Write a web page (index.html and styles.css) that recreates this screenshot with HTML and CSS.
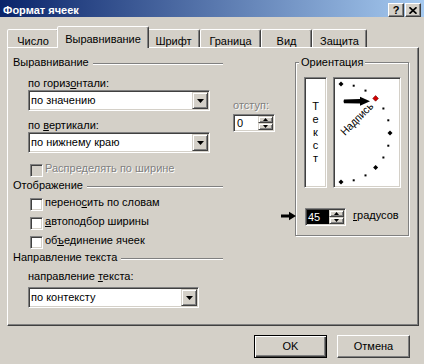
FILE: index.html
```html
<!DOCTYPE html>
<html lang="ru">
<head>
<meta charset="utf-8">
<title>Формат ячеек</title>
<link rel="stylesheet" href="styles.css">
</head>
<body>
<div class="titlebar">
  <span class="title">Формат ячеек</span>
  <div class="tb-buttons">
    <span class="tb-btn">?</span>
    <span class="tb-btn"><svg width="8" height="7" viewBox="0 0 8 7"><path d="M0.5 0.3 L7.5 6.7 M7.5 0.3 L0.5 6.7" stroke="#000" stroke-width="1.7" fill="none"/></svg></span>
  </div>
</div>

<div class="tabs">
  <div class="tab w-num">Число</div>
  <div class="tab active">Выравнивание</div>
  <div class="tab w-font">Шрифт</div>
  <div class="tab w-border">Граница</div>
  <div class="tab w-view">Вид</div>
  <div class="tab w-prot">Защита</div>
</div>

<div class="panel">
  <div class="col-left">
    <div class="grp-hdr"><span>Выравнивание</span><span class="line"></span></div>
    <div class="lbl lbl-h">по гориз<u>о</u>нтали:</div>
    <div class="combo w-wide">
      <span class="combo-val">по значению</span>
      <span class="dd-btn"><svg width="7" height="4" viewBox="0 0 7 4"><path d="M0 0 H7 L3.5 4 Z" fill="#000"/></svg></span>
    </div>
    <div class="lbl lbl-v">по <u>в</u>ертикали:</div>
    <div class="combo w-wide">
      <span class="combo-val">по нижнему краю</span>
      <span class="dd-btn"><svg width="7" height="4" viewBox="0 0 7 4"><path d="M0 0 H7 L3.5 4 Z" fill="#000"/></svg></span>
    </div>
    <div class="cb-row cb-first"><span class="cb disabled"></span><span class="cb-text dis">Распределять по ширине</span></div>
    <div class="grp-hdr hdr-2"><span>Отображение</span><span class="line"></span></div>
    <div class="cb-row cb-a"><span class="cb"></span><span class="cb-text">перено<u>с</u>ить по словам</span></div>
    <div class="cb-row cb-b"><span class="cb"></span><span class="cb-text"><u>а</u>втоподбор ширины</span></div>
    <div class="cb-row cb-b"><span class="cb"></span><span class="cb-text">об<u>ъ</u>единение ячеек</span></div>
    <div class="grp-hdr hdr-3"><span>Направление текста</span><span class="line"></span></div>
    <div class="lbl lbl-d">направление <u>т</u>екста:</div>
    <div class="combo w-narrow combo-d">
      <span class="combo-val">по контексту</span>
      <span class="dd-btn"><svg width="7" height="4" viewBox="0 0 7 4"><path d="M0 0 H7 L3.5 4 Z" fill="#000"/></svg></span>
    </div>
  </div>

  <div class="col-indent">
    <div class="lbl-ind dis">отступ:</div>
    <div class="spin spin-ind">
      <span class="spin-val">0</span>
      <span class="spin-btns">
        <span class="spin-btn"><svg width="5" height="3" viewBox="0 0 5 3"><path d="M0 3 H5 L2.5 0 Z" fill="#000"/></svg></span>
        <span class="spin-btn"><svg width="5" height="3" viewBox="0 0 5 3"><path d="M0 0 H5 L2.5 3 Z" fill="#000"/></svg></span>
      </span>
    </div>
  </div>

  <fieldset class="orient">
    <legend>Ориентация</legend>
    <div class="orient-row">
      <div class="vtext"><span>Т</span><span>е</span><span>к</span><span>с</span><span>т</span></div>
      <div class="dial">
        <svg width="64" height="107" viewBox="0 0 64 107">
          <g fill="#000">
            <polygon points="6,2.5 8.5,5 6,7.5 3.5,5"/>
            <polygon points="55,51.5 57.5,54 55,56.5 52.5,54"/>
            <polygon points="40.6,86.1 43.1,88.6 40.6,91.1 38.1,88.6"/>
            <polygon points="6,100.5 8.5,103 6,105.5 3.5,103"/>
            <rect x="17.7" y="5.7" width="2" height="2"/>
            <rect x="29.5" y="10.6" width="2" height="2"/>
            <rect x="47.4" y="28.5" width="2" height="2"/>
            <rect x="52.3" y="40.3" width="2" height="2"/>
            <rect x="52.3" y="65.7" width="2" height="2"/>
            <rect x="47.4" y="77.5" width="2" height="2"/>
            <rect x="29.5" y="95.4" width="2" height="2"/>
            <rect x="17.7" y="100.3" width="2" height="2"/>
            <path d="M9 20.5 L25 20 L25 17.8 L35 22.3 L25 26.8 L25 24.6 L9 24.2 Q8 22.4 9 20.5 Z"/>
          </g>
          <polygon points="40.6,16.6 43.4,19.4 40.6,22.2 37.8,19.4" fill="#d40000" stroke="#600" stroke-width="0.6"/>
          <text x="0" y="0" transform="translate(10 57) rotate(-45)" font-family="Liberation Sans, Arial, sans-serif" font-size="11" textLength="41" lengthAdjust="spacingAndGlyphs" fill="#000">Надпись</text>
        </svg>
      </div>
    </div>
    <div class="deg-row">
      <svg class="anno-arrow" width="16" height="10" viewBox="0 0 16 10"><path d="M0 3.4 H8 V0.8 L15 5 L8 9.2 V6.6 H0 Z" fill="#000"/></svg>
      <div class="spin spin-deg">
        <span class="spin-val"><span class="sel">45</span></span>
        <span class="spin-btns">
          <span class="spin-btn"><svg width="5" height="3" viewBox="0 0 5 3"><path d="M0 3 H5 L2.5 0 Z" fill="#000"/></svg></span>
          <span class="spin-btn"><svg width="5" height="3" viewBox="0 0 5 3"><path d="M0 0 H5 L2.5 3 Z" fill="#000"/></svg></span>
        </span>
      </div>
      <span class="deg-lbl"><u>г</u>радусов</span>
    </div>
  </fieldset>
</div>

<div class="buttons">
  <div class="btn default">OK</div>
  <div class="btn">Отмена</div>
</div>
</body>
</html>
```

FILE: styles.css
```css
* { box-sizing: border-box; }
html, body { margin: 0; padding: 0; }
body {
  width: 424px;
  height: 364px;
  overflow: hidden;
  background: #d4d0c8;
  font-family: "Liberation Sans", Arial, sans-serif;
  font-size: 11px;
  color: #000;
}

/* title bar */
.titlebar {
  height: 17px;
  background: linear-gradient(to right, #0a246a, #a6caf0);
  display: flex;
  justify-content: space-between;
  align-items: flex-start;
}
.title {
  color: #fff;
  font-weight: bold;
  padding: 2px 0 0 3px;
  line-height: 16px;
}
.tb-buttons {
  display: flex;
  gap: 1px;
  margin: 3px 3px 0 0;
}
.tb-btn {
  width: 16px;
  height: 14px;
  background: #d4d0c8;
  border: 1px solid;
  border-color: #fff #404040 #404040 #fff;
  box-shadow: inset -1px -1px #808080;
  display: flex;
  align-items: center;
  justify-content: center;
  font-weight: bold;
  font-size: 11px;
  line-height: 12px;
}

/* tabs */
.tabs {
  display: flex;
  align-items: flex-end;
  height: 21px;
  margin: 9px 0 0 7px;
}
.tab {
  height: 18px;
  background: #d4d0c8;
  border: 1px solid;
  border-bottom: none;
  border-color: #fff #404040 transparent #fff;
  border-radius: 2px 2px 0 0;
  box-shadow: inset -1px 0 #808080;
  text-align: center;
  padding-top: 4px;
  line-height: 14px;
}
.tab.active {
  width: 92px;
  height: 22px;
  margin: 0 -2px -1px;
  padding-top: 5px;
  line-height: 15px;
  position: relative;
  z-index: 1;
}
.w-num { width: 52px; }
.w-font { width: 53px; }
.w-border { width: 61px; }
.w-view { width: 51px; }
.w-prot { width: 55px; }

/* panel */
.panel {
  width: 412px;
  height: 279px;
  margin-left: 7px;
  border: 1px solid;
  border-color: #fff #404040 #404040 #fff;
  box-shadow: inset -1px -1px #808080;
  display: flex;
  align-items: flex-start;
  padding-left: 5px;
}

.col-left {
  width: 210px;
  padding-top: 8px;
}
.grp-hdr {
  display: flex;
  height: 13px;
  line-height: 13px;
}
.grp-hdr .line {
  flex: 1;
  height: 2px;
  margin: 7px 0 0 4px;
  border-top: 1px solid #808080;
  border-bottom: 1px solid #fff;
}
.hdr-2 { margin-top: 2px; }
.hdr-3 { margin-top: 2px; }

.lbl {
  margin-left: 15px;
  line-height: 13px;
  height: 13px;
}
.lbl-h { margin-top: 8px; }
.lbl-v { margin-top: 8px; }
.lbl-d { margin-top: 6px; }

.combo {
  display: flex;
  height: 21px;
  margin-left: 15px;
  background: #fff;
  border: 1px solid;
  border-color: #808080 #fff #fff #808080;
  box-shadow: inset 1px 1px #404040, inset -1px -1px #d4d0c8;
  padding: 1px;
}
.w-wide { width: 182px; }
.w-narrow { width: 171px; }
.combo-d { margin-top: 4px; }
.combo-val {
  flex: 1;
  padding-left: 1px;
  line-height: 17px;
  white-space: nowrap;
}
.dd-btn {
  width: 16px;
  height: 17px;
  background: #d4d0c8;
  border: 1px solid;
  border-color: #d4d0c8 #404040 #404040 #d4d0c8;
  box-shadow: inset 1px 1px #fff, inset -1px -1px #808080;
  display: flex;
  align-items: center;
  justify-content: center;
}
.dd-btn svg { display: block; }

.cb-row {
  display: flex;
  height: 15px;
  margin-left: 17px;
}
.cb-first { margin-top: 9px; }
.cb-a { margin-top: 4px; }
.cb-b { margin-top: 4px; }
.cb {
  width: 13px;
  height: 13px;
  margin-top: 2px;
  margin-right: 2px;
  background: #fff;
  border: 1px solid;
  border-color: #808080 #fff #fff #808080;
  box-shadow: inset 1px 1px #404040, inset -1px -1px #d4d0c8;
}
.cb.disabled { background: #d4d0c8; }
.cb-text {
  line-height: 13px;
  white-space: nowrap;
}
.dis {
  color: #808080;
  text-shadow: 1px 1px 0 #fff;
}

/* indent */
.col-indent {
  width: 42px;
  margin-left: 10px;
  padding-top: 51px;
}
.lbl-ind {
  line-height: 13px;
  height: 13px;
}
.spin {
  display: flex;
  height: 18px;
  background: #fff;
  border: 1px solid;
  border-color: #808080 #fff #fff #808080;
  box-shadow: inset 1px 1px #404040, inset -1px -1px #d4d0c8;
  padding: 1px;
}
.spin-ind { margin-top: 2px; }
.spin-val {
  flex: 1;
  line-height: 14px;
  padding-left: 2px;
}
.spin-btns {
  width: 15px;
  display: flex;
  flex-direction: column;
}
.spin-btn {
  flex: 1;
  background: #d4d0c8;
  border: 1px solid;
  border-color: #d4d0c8 #404040 #404040 #d4d0c8;
  box-shadow: inset 1px 1px #fff, inset -1px -1px #808080;
  display: flex;
  align-items: center;
  justify-content: center;
}
.spin-btn svg { display: block; }

/* orientation group */
.orient {
  width: 114px;
  margin: 8px 0 0 20px;
  padding: 0 0 9px 0;
  min-width: 0;
  border: 1px solid #808080;
  box-shadow: inset 1px 1px #fff, 1px 1px 0 #fff;
}
.orient legend {
  padding: 0 2px;
  margin-left: 3px;
  line-height: 13px;
  background: #d4d0c8;
}
.orient-row {
  display: flex;
  gap: 6px;
  height: 111px;
  margin: 8px 0 0 8px;
}
.vtext, .dial {
  height: 111px;
  background: #fff;
  border: 1px solid;
  border-color: #808080 #fff #fff #808080;
  box-shadow: inset 1px 1px #404040, inset -1px -1px #d4d0c8;
  padding: 1px;
}
.vtext {
  width: 23px;
  display: flex;
  flex-direction: column;
  align-items: center;
  justify-content: center;
  line-height: 13px;
}
.dial { width: 68px; }
.dial svg { display: block; }

.deg-row {
  display: flex;
  align-items: flex-start;
  margin: 20px 0 0 9px;
  position: relative;
}
.anno-arrow {
  position: absolute;
  left: -24px;
  top: 3px;
}
.spin-deg { width: 41px; }
.spin-deg .spin-val { padding-left: 0; background: #000; }
.sel {
  color: #fff;
  padding-left: 1px;
}
.deg-lbl {
  margin: 1px 0 0 7px;
  line-height: 13px;
}

/* bottom buttons */
.buttons {
  display: flex;
  justify-content: flex-end;
  gap: 10px;
  margin-top: 9px;
  padding-right: 14px;
}
.btn {
  width: 73px;
  height: 23px;
  border: 1px solid;
  border-color: #fff #404040 #404040 #fff;
  box-shadow: inset -1px -1px #808080;
  text-align: center;
  line-height: 21px;
}
.btn.default {
  border-color: #000;
  box-shadow: inset 1px 1px #fff, inset -1px -1px #404040, inset -2px -2px #808080;
}
```
